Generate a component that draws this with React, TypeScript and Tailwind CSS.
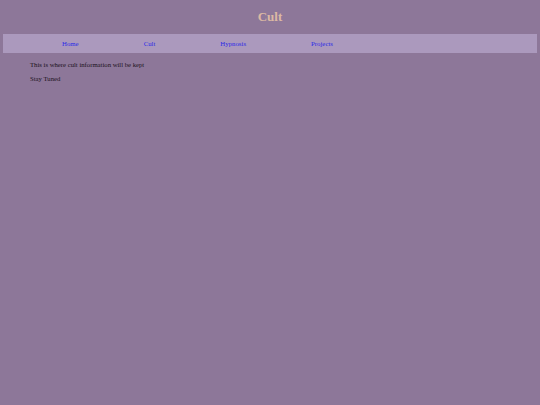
import React from 'react';

const links = ['Home', 'Cult', 'Hypnosis', 'Projects'];

export default function App() {
  return (
    <div className="min-h-[405px] w-full bg-[#8d7799] font-['Liberation_Serif',serif] pt-[9px]">
      {/* Title */}
      <h1 className="text-center text-[13px] leading-[16px] font-bold text-[#dcb9a3]">Cult</h1>

      {/* Nav bar */}
      <nav className="mx-[3px] mt-[9px] h-[19px] bg-[#ab99bd] flex items-center pl-[59px] gap-[65px]">
        {links.map((l) => (
          <a key={l} href="#" className="text-[6.8px] leading-[9px] text-[#2a2ae6]">
            {l}
          </a>
        ))}
      </nav>

      {/* Content */}
      <div className="pl-[30px] pt-[7px] text-[6.7px] leading-[9px] text-[#1b1220] flex flex-col gap-[5px]">
        <p>This is where cult information will be kept</p>
        <p>Stay Tuned</p>
      </div>
    </div>
  );
}
